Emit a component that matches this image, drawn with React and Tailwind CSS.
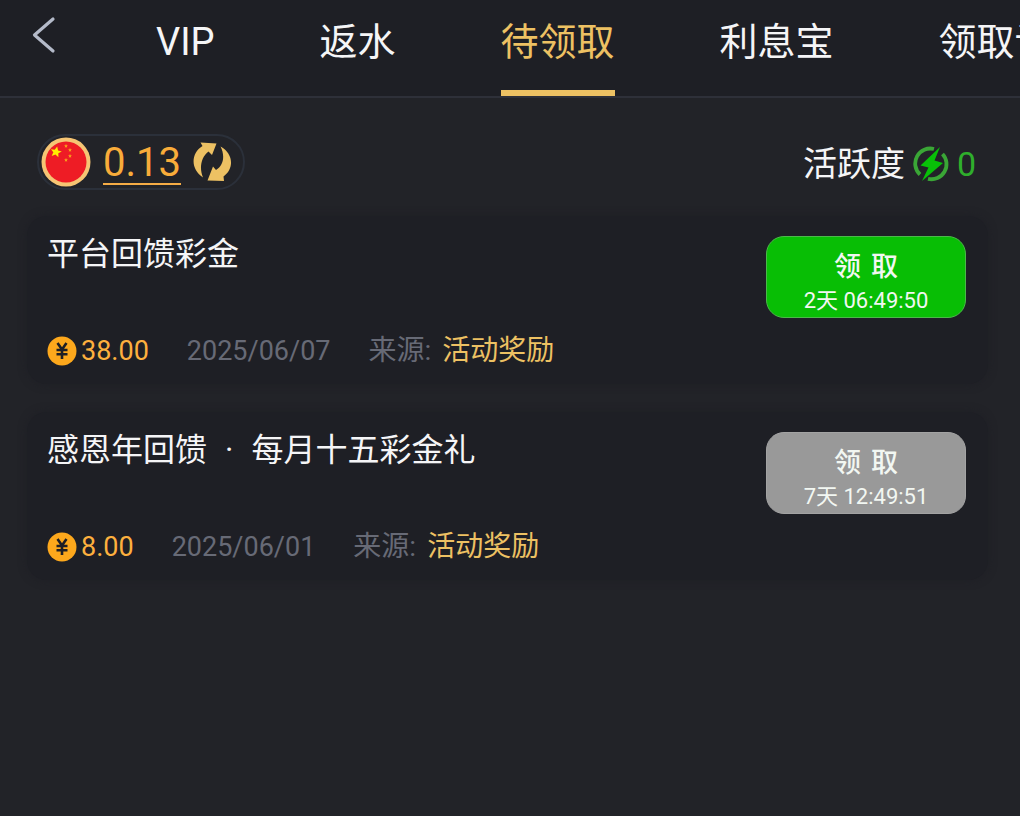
import React from "react";

const tabs = [
  { label: "VIP" },
  { label: "返水" },
  { label: "待领取", active: true },
  { label: "利息宝" },
  { label: "领取记录" },
];

const rewards = [
  {
    title: ["平台回馈彩金"],
    amount: "38.00",
    date: "2025/06/07",
    source: "活动奖励",
    countdown: "2天 06:49:50",
    ready: true,
  },
  {
    title: ["感恩年回馈", "·", "每月十五彩金礼"],
    amount: "8.00",
    date: "2025/06/01",
    source: "活动奖励",
    countdown: "7天 12:49:51",
    ready: false,
  },
];

const BackIcon = () => (
  <svg viewBox="0 0 24 38" className="w-6 h-[38px]" fill="none">
    <path
      d="M21 3 L2.5 19 L21 35"
      stroke="#b4bac9"
      strokeWidth="3.2"
      strokeLinecap="round"
      strokeLinejoin="round"
    />
  </svg>
);

const star =
  "M0 -5 L1.5 -1.6 L4.8 -1.5 L2.2 .7 L3 4.1 L0 2.3 L-3 4.1 L-2.2 .7 L-4.8 -1.5 L-1.5 -1.6 Z";

const FlagIcon = () => (
  <svg viewBox="0 0 50 50" className="w-[50px] h-[50px]">
    <circle cx="25" cy="25" r="24.5" fill="#f6c574" />
    <circle cx="25" cy="25" r="20.5" fill="#ee1c25" />
    <path d={star} fill="#ffee00" transform="translate(15 15) rotate(12) scale(1.15)" />
    <path d={star} fill="#f9a01b" transform="translate(25 9) scale(.4)" />
    <path d={star} fill="#f9a01b" transform="translate(29 13) scale(.4)" />
    <path d={star} fill="#f9a01b" transform="translate(29 19) scale(.4)" />
    <path d={star} fill="#f9a01b" transform="translate(25 23) scale(.4)" />
  </svg>
);

const RefreshIcon = () => (
  <svg viewBox="0 0 40 42" className="w-10 h-[42px]" fill="#edc163">
    <path d="M7.5 1.5 L23.5 2.5 L19 14 L15.5 10.5 C8 16 6 27 10 36.5 C-3 28 -2 12 9.5 5 Z" />
    <path d="M31 40 L14.5 39.5 L20 25.5 L23 29 C31 24 32 14 27.5 5.5 C41 13 41 28 30.5 35.5 Z" />
  </svg>
);

const EnergyIcon = () => (
  <svg viewBox="0 0 36 36" className="w-9 h-9">
    <g fill="none" stroke="#3aa636" strokeWidth="3.8">
      <path d="M21 3 A15 15 0 0 0 7 28.5" />
      <path d="M29.5 8 A15 15 0 0 1 15 32.8" />
    </g>
    <path d="M27 1 L7.5 19.5 L15.5 21.5 L9 35 L30 17 L21.5 14.5 Z" fill="#08c108" />
  </svg>
);

const CoinIcon = () => (
  <svg viewBox="0 0 30 30" className="w-[30px] h-[30px]">
    <circle cx="15" cy="15" r="14.5" fill="#fda81c" />
    <path
      d="M10.5 7 L15 13.5 L19.5 7 M9.5 14 H20.5 M9.5 18.2 H20.5 M15 13.5 V23"
      fill="none"
      stroke="#1e1f25"
      strokeWidth="2.6"
    />
  </svg>
);

const RewardCard = ({ reward }) => (
  <li className="flex items-stretch justify-between rounded-[20px] bg-[#1e1f25] pl-5 pr-[22px] pt-5 pb-[18px] min-h-[168px] shadow-[0_0_8px_#1e1f25]">
    <div className="flex flex-col justify-between">
      <h2 className="flex gap-[18px] text-[32px] leading-9 text-[#f5f5f7]">
        {reward.title.map((part) => (
          <span key={part}>{part}</span>
        ))}
      </h2>
      <div className="flex items-center gap-[38px] text-[27px] leading-[30px]">
        <span className="flex items-center gap-1 text-[#fdb03e]">
          <CoinIcon />
          {reward.amount}
        </span>
        <time className="text-[#676a76]">{reward.date}</time>
        <span className="flex gap-[11px] text-[28px]">
          <span className="text-[#676a76]">来源:</span>
          <span className="text-[#edc163]">{reward.source}</span>
        </span>
      </div>
    </div>
    <button
      type="button"
      disabled={!reward.ready}
      className={`flex flex-col items-center justify-center w-[200px] h-[82px] pt-3 rounded-[18px] border text-[#f2f7f2] ${
        reward.ready
          ? "bg-[#08be05] border-[#4cb84a]"
          : "bg-[#999999] border-[#a3a3a3]"
      }`}
    >
      <span className="flex gap-2.5 text-[27px] leading-9 font-medium">
        <span>领</span>
        <span>取</span>
      </span>
      <span className="text-[22px] leading-8">{reward.countdown}</span>
    </button>
  </li>
);

const App = () => {
  return (
    <div className="min-h-screen bg-white pr-2.5">
      <div className="min-h-screen bg-[#222328] overflow-hidden font-[Roboto,'Noto_Sans_CJK_SC',sans-serif]">
        <header className="flex items-start h-[98px] bg-[#1e1f25] border-b-2 border-[#2e3039] pl-8">
          <button type="button" aria-label="返回" className="shrink-0 mt-4">
            <BackIcon />
          </button>
          <nav className="flex gap-[105px] h-full ml-[100px]">
            {tabs.map((tab) => (
              <a
                key={tab.label}
                href="#"
                className={`shrink-0 whitespace-nowrap h-full pt-[17px] text-[38px] leading-[50px] border-b-6 ${
                  tab.active
                    ? "text-[#edc163] border-[#edc163]"
                    : "text-[#f5f5f7] border-transparent"
                }`}
              >
                {tab.label}
              </a>
            ))}
          </nav>
        </header>

        <main className="pl-[27px] pr-8">
          {/* Solde et activité */}
          <div className="flex items-center justify-between mt-9 pl-2.5 pr-3">
            <div className="flex items-center h-14 rounded-full border-2 border-[#2b303a] pl-0.5 pr-2.5">
              <FlagIcon />
              <a
                href="#"
                className="ml-3 pt-1 border-b-2 border-[#f5ac46] text-[40px] leading-10 text-[#f9ac3a]"
              >
                0.13
              </a>
              <button type="button" aria-label="刷新" className="ml-3">
                <RefreshIcon />
              </button>
            </div>
            <p className="flex items-center pt-1 text-[34px] leading-10 text-[#f5f5f7]">
              活跃度
              <span className="flex items-center gap-2 ml-2 text-[#2fae2c]">
                <EnergyIcon />0
              </span>
            </p>
          </div>

          <ul className="flex flex-col gap-7 mt-[26px]">
            {rewards.map((reward) => (
              <RewardCard key={reward.date} reward={reward} />
            ))}
          </ul>
        </main>
      </div>
    </div>
  );
};

export default App;
